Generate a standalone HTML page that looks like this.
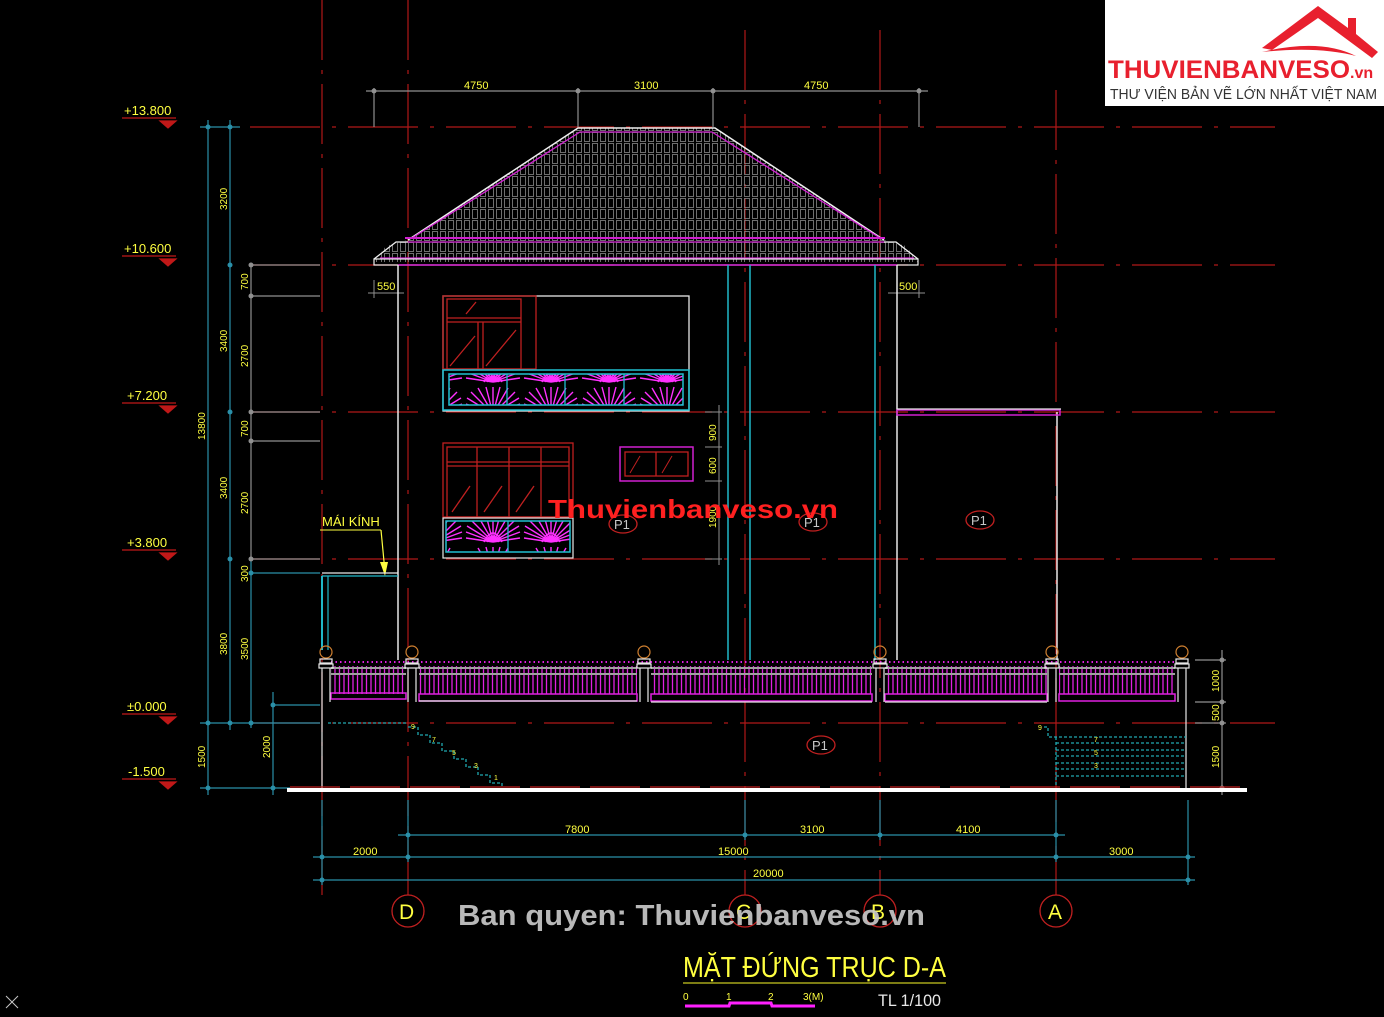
<!DOCTYPE html>
<html><head><meta charset="utf-8">
<style>
html,body{margin:0;padding:0;background:#000;width:1384px;height:1017px;overflow:hidden}
svg{display:block}
text{font-family:"Liberation Sans","DejaVu Sans",sans-serif}
</style></head><body>
<svg width="1384" height="1017" viewBox="0 0 1384 1017" xmlns="http://www.w3.org/2000/svg">
<defs>
<pattern id="tile" width="8" height="11" patternUnits="userSpaceOnUse">
<rect x="0.5" y="0.5" width="5" height="9" fill="none" stroke="#8a8a8a" stroke-width="0.8"/>
</pattern>
<pattern id="fence" width="4.5" height="50" patternUnits="userSpaceOnUse">
<line x1="2" y1="0" x2="2" y2="50" stroke="#e020e0" stroke-width="1.3"/>
</pattern>
<pattern id="orn" width="58" height="32" patternUnits="userSpaceOnUse">
<path d="M29 30 L29 3 M29 30 L22 3 M29 30 L36 3 M29 30 L14 4 M29 30 L44 4 M29 30 L7 8 M29 30 L51 8 M29 30 L3 14 M29 30 L55 14 M29 30 L2 20 M29 30 L56 20 M29 30 L2 26 M29 30 L56 26 M20 30 Q29 12 38 30 M23 30 Q29 18 35 30" stroke="#ff30ff" stroke-width="1.4" fill="none"/>
</pattern>
</defs>
<rect width="1384" height="1017" fill="#000"/>

<g stroke="#b01818" stroke-width="1.2" stroke-dasharray="70,12,4,12">
<line x1="250" y1="127" x2="1275" y2="127"/>
<line x1="250" y1="265" x2="1275" y2="265"/>
<line x1="250" y1="412" x2="1275" y2="412"/>
<line x1="250" y1="559" x2="1275" y2="559"/>
<line x1="250" y1="723" x2="1275" y2="723"/>
</g>
<g stroke="#b01818" stroke-width="1.2" stroke-dasharray="60,10,4,10">
<line x1="322" y1="0" x2="322" y2="895"/>
<line x1="408" y1="0" x2="408" y2="895"/>
<line x1="745" y1="30" x2="745" y2="895"/>
<line x1="880" y1="30" x2="880" y2="895"/>
<line x1="1056" y1="90" x2="1056" y2="895"/>
</g>

<g fill="#ffff40" font-size="13">
<text x="124" y="115">+13.800</text>
<text x="124" y="253">+10.600</text>
<text x="127" y="400">+7.200</text>
<text x="127" y="547">+3.800</text>
<text x="127" y="711">±0.000</text>
<text x="128" y="776">-1.500</text>
</g>
<g stroke="#c01818" stroke-width="1.2" fill="#c01818">
<line x1="122" y1="118" x2="176" y2="118"/><path d="M160 121 L176 121 L168 128Z"/>
<line x1="122" y1="256" x2="176" y2="256"/><path d="M160 259 L176 259 L168 266Z"/>
<line x1="122" y1="403" x2="176" y2="403"/><path d="M160 406 L176 406 L168 413Z"/>
<line x1="122" y1="550" x2="176" y2="550"/><path d="M160 553 L176 553 L168 560Z"/>
<line x1="122" y1="714" x2="176" y2="714"/><path d="M160 717 L176 717 L168 724Z"/>
<line x1="122" y1="779" x2="176" y2="779"/><path d="M160 782 L176 782 L168 789Z"/>
</g>

<g stroke="#2a8fa8" stroke-width="1.2">
<line x1="208" y1="120" x2="208" y2="795"/>
<line x1="230" y1="120" x2="230" y2="730"/>
<line x1="251" y1="559" x2="251" y2="728"/>
<line x1="273" y1="692" x2="273" y2="795"/>
<line x1="200" y1="127" x2="240" y2="127"/>
<line x1="200" y1="723" x2="320" y2="723"/>
<line x1="200" y1="788" x2="290" y2="788"/>
<line x1="251" y1="573" x2="320" y2="573"/>
<line x1="273" y1="705" x2="320" y2="705"/>
</g>
<g stroke="#909090" stroke-width="1.2">
<line x1="251" y1="265" x2="251" y2="560"/>
<line x1="251" y1="265" x2="320" y2="265"/>
<line x1="251" y1="296" x2="320" y2="296"/>
<line x1="251" y1="412" x2="320" y2="412"/>
<line x1="251" y1="441" x2="320" y2="441"/>
<line x1="251" y1="559" x2="320" y2="559"/>
</g>
<g fill="#2a8fa8"><circle cx="208" cy="127" r="2.5"/><circle cx="230" cy="127" r="2.5"/><circle cx="230" cy="265" r="2.5"/><circle cx="230" cy="412" r="2.5"/><circle cx="230" cy="559" r="2.5"/><circle cx="208" cy="723" r="2.5"/><circle cx="230" cy="723" r="2.5"/><circle cx="251" cy="723" r="2.5"/><circle cx="208" cy="788" r="2.5"/><circle cx="273" cy="788" r="2.5"/><circle cx="251" cy="573" r="2.5"/><circle cx="273" cy="705" r="2.5"/></g>
<g fill="#909090"><circle cx="251" cy="265" r="2.5"/><circle cx="251" cy="296" r="2.5"/><circle cx="251" cy="412" r="2.5"/><circle cx="251" cy="441" r="2.5"/><circle cx="251" cy="559" r="2.5"/></g>
<g fill="#ffff40" font-size="10">
<text transform="translate(227,210) rotate(-90)">3200</text>
<text transform="translate(227,352) rotate(-90)">3400</text>
<text transform="translate(227,499) rotate(-90)">3400</text>
<text transform="translate(227,655) rotate(-90)">3800</text>
<text transform="translate(205,440) rotate(-90)">13800</text>
<text transform="translate(205,768) rotate(-90)">1500</text>
<text transform="translate(248,290) rotate(-90)">700</text>
<text transform="translate(248,367) rotate(-90)">2700</text>
<text transform="translate(248,437) rotate(-90)">700</text>
<text transform="translate(248,514) rotate(-90)">2700</text>
<text transform="translate(248,582) rotate(-90)">300</text>
<text transform="translate(248,660) rotate(-90)">3500</text>
<text transform="translate(270,758) rotate(-90)">2000</text>
</g>

<g stroke="#909090" stroke-width="1.2">
<line x1="366" y1="91" x2="928" y2="91"/>
<line x1="374" y1="88" x2="374" y2="127"/>
<line x1="578" y1="88" x2="578" y2="127"/>
<line x1="713" y1="88" x2="713" y2="127"/>
<line x1="919" y1="88" x2="919" y2="127"/>
</g>
<g fill="#909090"><circle cx="374" cy="91" r="2.5"/><circle cx="578" cy="91" r="2.5"/><circle cx="713" cy="91" r="2.5"/><circle cx="919" cy="91" r="2.5"/></g>
<g fill="#ffff40" font-size="11"><text x="464" y="89">4750</text><text x="634" y="89">3100</text><text x="804" y="89">4750</text></g>

<polygon points="578,128 715,128 884,240 408,240" fill="url(#tile)"/>
<polygon points="386,246 408,240 884,240 906,246 918,262 374,262" fill="url(#tile)"/>
<polyline points="408,240 578,128 715,128 884,240" fill="none" stroke="#f0f0f0" stroke-width="1.5"/>
<polyline points="412,238 580,132 712,132 880,238" fill="none" stroke="#d020d0" stroke-width="1.3"/>
<line x1="405" y1="238" x2="885" y2="238" stroke="#d020d0" stroke-width="2"/>
<line x1="405" y1="242" x2="885" y2="242" stroke="#d020d0" stroke-width="1.2"/>
<polyline points="374,259 396,242 408,242" fill="none" stroke="#f0f0f0" stroke-width="1.3"/>
<polyline points="884,242 896,242 918,259" fill="none" stroke="#f0f0f0" stroke-width="1.3"/>
<line x1="380" y1="258" x2="914" y2="258" stroke="#d020d0" stroke-width="1.3"/>
<rect x="374" y="259" width="544" height="6" fill="none" stroke="#f0f0f0" stroke-width="1.2"/>
<line x1="398" y1="265" x2="897" y2="265" stroke="#d020d0" stroke-width="1.5"/>

<g stroke="#909090" stroke-width="1"><line x1="368" y1="293" x2="404" y2="293"/><line x1="374" y1="280" x2="374" y2="298"/><line x1="888" y1="293" x2="925" y2="293"/><line x1="919" y1="280" x2="919" y2="298"/></g>
<g fill="#ffff40" font-size="11"><text x="377" y="290">550</text><text x="899" y="290">500</text></g>

<g stroke="#e8e8e8" stroke-width="1.5" fill="none">
<line x1="398" y1="265" x2="398" y2="660"/>
<line x1="897" y1="265" x2="897" y2="660"/>
<line x1="1057" y1="412" x2="1057" y2="660"/>
</g>
<g stroke="#20b8c8" stroke-width="1.5">
<line x1="728" y1="265" x2="728" y2="660"/>
<line x1="750" y1="265" x2="750" y2="660"/>
<line x1="875" y1="265" x2="875" y2="660"/>
</g>
<rect x="897" y="410" width="163" height="5" fill="none" stroke="#d020d0" stroke-width="1.5"/>
<line x1="897" y1="409" x2="1061" y2="409" stroke="#e8e8e8" stroke-width="1.2"/>

<rect x="443" y="296" width="246" height="115" fill="none" stroke="#e8e8e8" stroke-width="1.3"/>
<g stroke="#c02020" stroke-width="1.3" fill="none">
<rect x="443" y="296" width="93" height="73"/>
<rect x="447" y="299" width="74" height="70"/>
<line x1="447" y1="318" x2="521" y2="318"/>
<line x1="447" y1="322" x2="521" y2="322"/>
<line x1="478" y1="322" x2="478" y2="369"/>
<line x1="483" y1="322" x2="483" y2="369"/>
<line x1="450" y1="366" x2="475" y2="336"/>
<line x1="486" y1="366" x2="516" y2="330"/>
<line x1="466" y1="314" x2="476" y2="302"/>
</g>
<rect x="443" y="370" width="246" height="40" fill="none" stroke="#20c0d0" stroke-width="1.5"/>
<rect x="449" y="374" width="234" height="31" fill="url(#orn)" stroke="#20c0d0" stroke-width="1.5"/>
<g stroke="#20c0d0" stroke-width="1.3"><line x1="507" y1="374" x2="507" y2="405"/><line x1="565" y1="374" x2="565" y2="405"/><line x1="624" y1="374" x2="624" y2="405"/></g>

<g stroke="#c02020" stroke-width="1.3" fill="none">
<rect x="443" y="443" width="130" height="74"/>
<rect x="447" y="447" width="122" height="70"/>
<line x1="447" y1="462" x2="569" y2="462"/>
<line x1="447" y1="466" x2="569" y2="466"/>
<line x1="477" y1="447" x2="477" y2="517"/><line x1="509" y1="447" x2="509" y2="517"/><line x1="541" y1="447" x2="541" y2="517"/>
<line x1="452" y1="512" x2="470" y2="486"/><line x1="484" y1="512" x2="502" y2="486"/><line x1="516" y1="512" x2="534" y2="486"/>
</g>
<rect x="443" y="518" width="130" height="40" fill="none" stroke="#e8e8e8" stroke-width="1.2"/>
<rect x="446" y="521" width="124" height="31" fill="url(#orn)" stroke="#20c0d0" stroke-width="1.5"/>
<line x1="508" y1="521" x2="508" y2="552" stroke="#20c0d0" stroke-width="1.3"/>

<rect x="620" y="447" width="73" height="34" fill="none" stroke="#d020d0" stroke-width="1.5"/>
<rect x="625" y="452" width="63" height="24" fill="none" stroke="#c02020" stroke-width="1.3"/>
<line x1="656" y1="452" x2="656" y2="476" stroke="#c02020" stroke-width="1.3"/>
<line x1="630" y1="473" x2="640" y2="456" stroke="#c02020"/><line x1="662" y1="473" x2="672" y2="456" stroke="#c02020"/>
<g stroke="#909090"><line x1="719" y1="405" x2="719" y2="565"/><line x1="705" y1="412" x2="722" y2="412"/><line x1="705" y1="447" x2="722" y2="447"/><line x1="705" y1="481" x2="722" y2="481"/><line x1="705" y1="559" x2="722" y2="559"/></g>
<g fill="#ffff40" font-size="10"><text transform="translate(716,441) rotate(-90)">900</text><text transform="translate(716,474) rotate(-90)">600</text><text transform="translate(716,528) rotate(-90)">1900</text></g>

<g fill="none" stroke="#c02020" stroke-width="1.3"><ellipse cx="623" cy="524" rx="14" ry="9"/><ellipse cx="813" cy="522" rx="14" ry="9"/><ellipse cx="980" cy="520" rx="14" ry="9"/><ellipse cx="821" cy="745" rx="14" ry="9"/></g>
<g fill="#c8c8c8" font-size="13"><text x="614" y="529">P1</text><text x="804" y="527">P1</text><text x="971" y="525">P1</text><text x="812" y="750">P1</text></g>

<text x="322" y="526" fill="#ffff40" font-size="13">MÁI KÍNH</text>
<line x1="320" y1="530" x2="381" y2="530" stroke="#ffff40"/>
<line x1="381" y1="530" x2="385" y2="572" stroke="#ffff40" stroke-width="1.2"/>
<path d="M380 562 L388 562 L385 576Z" fill="#ffff40"/>
<line x1="322" y1="573" x2="398" y2="573" stroke="#e8e8e8" stroke-width="1.3"/>
<line x1="322" y1="576" x2="398" y2="576" stroke="#20b8c8" stroke-width="1.2"/>
<line x1="322" y1="576" x2="322" y2="650" stroke="#20b8c8" stroke-width="2"/>
<line x1="328" y1="576" x2="328" y2="650" stroke="#20b8c8" stroke-width="1.2"/>

<g>
<rect x="331" y="666" width="75" height="28" fill="url(#fence)"/>
<rect x="419" y="666" width="218" height="28" fill="url(#fence)"/>
<rect x="651" y="666" width="221" height="28" fill="url(#fence)"/>
<rect x="885" y="666" width="162" height="28" fill="url(#fence)"/>
<rect x="1059" y="666" width="116" height="28" fill="url(#fence)"/>
<g stroke="#a0a0a0" stroke-width="2">
<line x1="331" y1="668" x2="406" y2="668"/><line x1="419" y1="668" x2="637" y2="668"/><line x1="651" y1="668" x2="872" y2="668"/><line x1="885" y1="668" x2="1047" y2="668"/><line x1="1059" y1="668" x2="1175" y2="668"/>
<line x1="331" y1="674" x2="406" y2="674"/><line x1="419" y1="674" x2="637" y2="674"/><line x1="651" y1="674" x2="872" y2="674"/><line x1="885" y1="674" x2="1047" y2="674"/><line x1="1059" y1="674" x2="1175" y2="674"/>
</g>
<g stroke="#e020e0" stroke-width="1.5" fill="none">
<rect x="331" y="693" width="75" height="6"/><rect x="419" y="694" width="218" height="7"/><rect x="651" y="694" width="221" height="7"/><rect x="885" y="694" width="162" height="7"/><rect x="1059" y="694" width="116" height="7"/>
</g>
<g stroke="#e020e0" stroke-width="2" stroke-dasharray="1.5,3"><line x1="331" y1="662" x2="1175" y2="662"/></g>
<g stroke="#e8e8e8" stroke-width="1.2" fill="none">
<line x1="419" y1="701" x2="637" y2="701"/><line x1="651" y1="702" x2="872" y2="702"/><line x1="885" y1="702" x2="1047" y2="702"/>
</g>
</g>
<g fill="none" stroke-width="1.2">
<g transform="translate(326,0)"><circle cx="0" cy="652" r="6" stroke="#d08030"/><rect x="-6" y="659" width="12" height="4" stroke="#e8e8e8"/><rect x="-7" y="664" width="14" height="4" stroke="#e8e8e8"/><line x1="-4" y1="668" x2="-4" y2="790" stroke="#e8e8e8"/><line x1="4" y1="668" x2="4" y2="702" stroke="#e8e8e8"/></g>
<g transform="translate(412,0)"><circle cx="0" cy="652" r="6" stroke="#d08030"/><rect x="-6" y="659" width="12" height="4" stroke="#e8e8e8"/><rect x="-7" y="664" width="14" height="4" stroke="#e8e8e8"/><line x1="-4" y1="668" x2="-4" y2="702" stroke="#e8e8e8"/><line x1="4" y1="668" x2="4" y2="702" stroke="#e8e8e8"/></g>
<g transform="translate(644,0)"><circle cx="0" cy="652" r="6" stroke="#d08030"/><rect x="-6" y="659" width="12" height="4" stroke="#e8e8e8"/><rect x="-7" y="664" width="14" height="4" stroke="#e8e8e8"/><line x1="-4" y1="668" x2="-4" y2="702" stroke="#e8e8e8"/><line x1="4" y1="668" x2="4" y2="702" stroke="#e8e8e8"/></g>
<g transform="translate(880,0)"><circle cx="0" cy="652" r="6" stroke="#d08030"/><rect x="-6" y="659" width="12" height="4" stroke="#e8e8e8"/><rect x="-7" y="664" width="14" height="4" stroke="#e8e8e8"/><line x1="-4" y1="668" x2="-4" y2="702" stroke="#e8e8e8"/><line x1="4" y1="668" x2="4" y2="702" stroke="#e8e8e8"/></g>
<g transform="translate(1052,0)"><circle cx="0" cy="652" r="6" stroke="#d08030"/><rect x="-6" y="659" width="12" height="4" stroke="#e8e8e8"/><rect x="-7" y="664" width="14" height="4" stroke="#e8e8e8"/><line x1="-4" y1="668" x2="-4" y2="702" stroke="#e8e8e8"/><line x1="4" y1="668" x2="4" y2="702" stroke="#e8e8e8"/></g>
<g transform="translate(1182,0)"><circle cx="0" cy="652" r="6" stroke="#d08030"/><rect x="-6" y="659" width="12" height="4" stroke="#e8e8e8"/><rect x="-7" y="664" width="14" height="4" stroke="#e8e8e8"/><line x1="-4" y1="668" x2="-4" y2="702" stroke="#e8e8e8"/><line x1="4" y1="668" x2="4" y2="788" stroke="#e8e8e8"/></g>
</g>

<g stroke="#20a8b0" stroke-width="1.3" fill="none" stroke-dasharray="3,2">
<line x1="328" y1="723" x2="408" y2="723"/>
<polyline points="408,727 418,727 418,735 430,735 430,743 442,743 442,751 454,751 454,759 466,759 466,767 478,767 478,775 490,775 490,783 502,783 502,788"/>
<polyline points="1044,727 1048,727 1048,737 1186,737"/>
<line x1="1056" y1="743" x2="1186" y2="743"/><line x1="1056" y1="750" x2="1186" y2="750"/><line x1="1056" y1="756" x2="1186" y2="756"/><line x1="1056" y1="763" x2="1186" y2="763"/><line x1="1056" y1="769" x2="1186" y2="769"/><line x1="1056" y1="776" x2="1186" y2="776"/>
<line x1="1056" y1="737" x2="1056" y2="785"/>
</g>
<g fill="#ffff40" font-size="7"><text x="411" y="729">9</text><text x="432" y="742">7</text><text x="452" y="755">5</text><text x="474" y="768">3</text><text x="494" y="780">1</text><text x="1038" y="730">9</text><text x="1094" y="742">7</text><text x="1094" y="755">5</text><text x="1094" y="768">3</text></g>

<g stroke="#909090" stroke-width="1.2"><line x1="1222" y1="650" x2="1222" y2="795"/><line x1="1195" y1="660" x2="1226" y2="660"/><line x1="1195" y1="702" x2="1226" y2="702"/><line x1="1195" y1="723" x2="1226" y2="723"/></g>
<g fill="#909090"><circle cx="1222" cy="660" r="2.5"/><circle cx="1222" cy="702" r="2.5"/><circle cx="1222" cy="723" r="2.5"/><circle cx="1222" cy="788" r="2.5"/></g>
<g fill="#ffff40" font-size="10"><text transform="translate(1219,692) rotate(-90)">1000</text><text transform="translate(1219,721) rotate(-90)">500</text><text transform="translate(1219,768) rotate(-90)">1500</text></g>

<line x1="287" y1="790" x2="1247" y2="790" stroke="#ffffff" stroke-width="4"/>
<g stroke="#c02020" stroke-width="1.2" stroke-dasharray="50,10"><line x1="290" y1="787" x2="1245" y2="787"/></g>

<g stroke="#2a8fa8" stroke-width="1.2">
<line x1="398" y1="835" x2="1065" y2="835"/>
<line x1="313" y1="857" x2="1195" y2="857"/>
<line x1="313" y1="880" x2="1195" y2="880"/>
<line x1="322" y1="800" x2="322" y2="885"/>
<line x1="408" y1="800" x2="408" y2="862"/>
<line x1="745" y1="800" x2="745" y2="840"/>
<line x1="880" y1="800" x2="880" y2="840"/>
<line x1="1056" y1="800" x2="1056" y2="862"/>
<line x1="1188" y1="800" x2="1188" y2="885"/>
</g>
<g fill="#2a8fa8"><circle cx="408" cy="835" r="2.5"/><circle cx="745" cy="835" r="2.5"/><circle cx="880" cy="835" r="2.5"/><circle cx="1056" cy="835" r="2.5"/><circle cx="322" cy="857" r="2.5"/><circle cx="408" cy="857" r="2.5"/><circle cx="1056" cy="857" r="2.5"/><circle cx="1188" cy="857" r="2.5"/><circle cx="322" cy="880" r="2.5"/><circle cx="1188" cy="880" r="2.5"/></g>
<g fill="#ffff40" font-size="11">
<text x="565" y="833">7800</text><text x="800" y="833">3100</text><text x="956" y="833">4100</text>
<text x="353" y="855">2000</text><text x="718" y="855">15000</text><text x="1109" y="855">3000</text>
<text x="753" y="877">20000</text></g>

<g fill="none" stroke="#c02020" stroke-width="1.3">
<circle cx="408" cy="911" r="16"/><circle cx="745" cy="911" r="16"/><circle cx="880" cy="911" r="16"/><circle cx="1056" cy="911" r="16"/>
</g>
<g fill="#ffff40" font-size="21"><text x="399" y="919">D</text><text x="736" y="919">C</text><text x="871" y="919">B</text><text x="1048" y="919">A</text></g>

<text x="548" y="518" fill="#ff2020" font-size="26" font-weight="bold" textLength="290" lengthAdjust="spacingAndGlyphs">Thuvienbanveso.vn</text>
<text x="458" y="925" fill="#c8c8c8" font-size="29" font-weight="bold" opacity="0.92" textLength="467" lengthAdjust="spacingAndGlyphs">Ban quyen: Thuvienbanveso.vn</text>

<text x="683" y="977" fill="#ffff40" font-size="29" textLength="263" lengthAdjust="spacingAndGlyphs">MẶT ĐỨNG TRỤC D-A</text>
<line x1="683" y1="983" x2="946" y2="983" stroke="#c8c820" stroke-width="1.2"/>
<g fill="#ffff40" font-size="10"><text x="683" y="1000">0</text><text x="726" y="1000">1</text><text x="768" y="1000">2</text><text x="803" y="1000">3(M)</text></g>
<polyline points="685,1006 729,1006 730,1003 771,1003 772,1006 815,1006" fill="none" stroke="#ff20ff" stroke-width="3"/>
<text x="878" y="1006" fill="#e8e8e8" font-size="17" textLength="63" lengthAdjust="spacingAndGlyphs">TL 1/100</text>

<g stroke="#c8c8c8" stroke-width="1"><line x1="6" y1="996" x2="18" y2="1008"/><line x1="18" y1="996" x2="6" y2="1008"/></g>

<rect x="1105" y="0" width="279" height="106" fill="#ffffff"/>
<path d="M1262 48 L1318 6 L1348 28 L1348 18 L1356 18 L1356 34 L1378 52 L1372 58 L1318 18 L1272 50Z" fill="#e8202e"/>
<path d="M1262 52 Q1320 38 1356 56 Q1318 46 1262 52Z" fill="#e8202e"/>
<text x="1108" y="78" fill="#e8202e" font-size="25" font-weight="bold" textLength="242" lengthAdjust="spacingAndGlyphs">THUVIENBANVESO</text>
<text x="1350" y="78" fill="#e8202e" font-size="16" font-weight="bold">.vn</text>
<text x="1110" y="99" fill="#333" font-size="15" textLength="267" lengthAdjust="spacingAndGlyphs">THƯ VIỆN BẢN VẼ LỚN NHẤT VIỆT NAM</text>
</svg>
</body></html>
